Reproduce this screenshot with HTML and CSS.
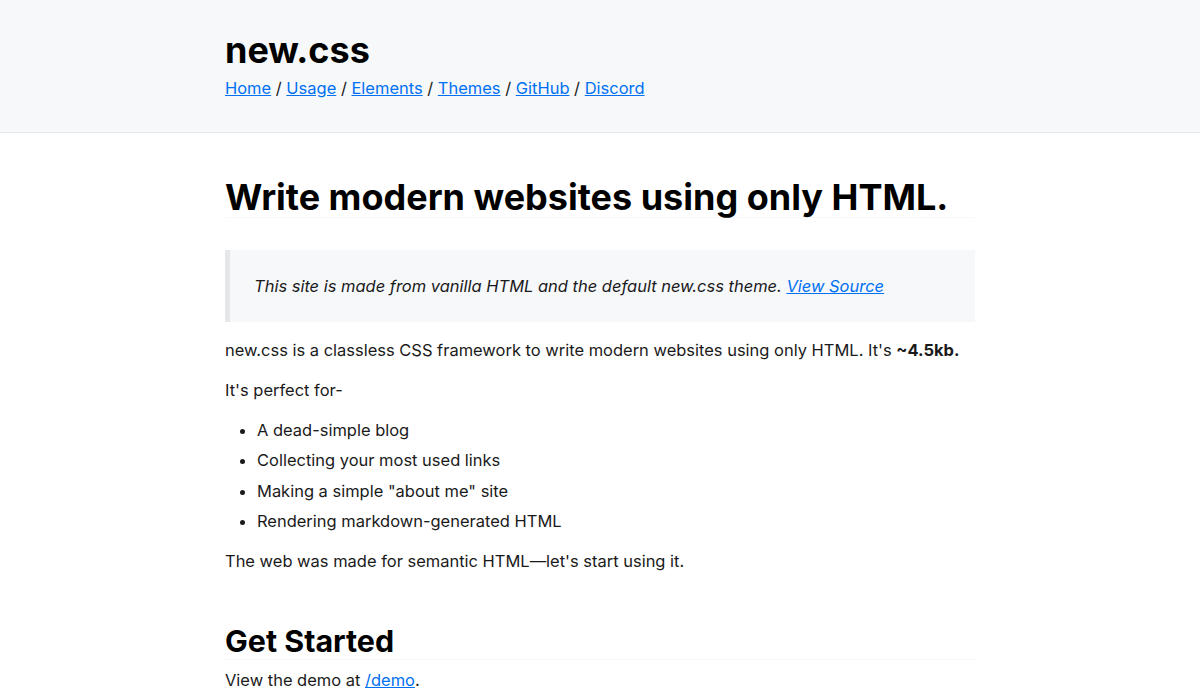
FILE: index.html
```html
<!DOCTYPE html>
<html lang="en">
<head>
<meta charset="utf-8">
<title>new.css</title>
<link rel="stylesheet" href="styles.css">
</head>
<body>
<header class="site-header">
  <div class="wrap">
    <h1 class="brand">new.css</h1>
    <nav class="site-nav">
      <a href="#">Home</a> / <a href="#">Usage</a> / <a href="#">Elements</a> / <a href="#">Themes</a> / <a href="#">GitHub</a> / <a href="#">Discord</a>
    </nav>
  </div>
</header>
<main class="wrap content">
  <h1 class="title">Write modern websites using only HTML.</h1>
  <blockquote class="note">This site is made from vanilla HTML and the default new.css theme. <a href="#">View Source</a></blockquote>
  <p class="para">new.css is a classless CSS framework to write modern websites using only HTML. It's <b>~4.5kb.</b></p>
  <p class="para">It's perfect for-</p>
  <ul class="list">
    <li>A dead-simple blog</li>
    <li>Collecting your most used links</li>
    <li>Making a simple "about me" site</li>
    <li>Rendering markdown-generated HTML</li>
  </ul>
  <p class="para">The web was made for semantic HTML—let's start using it.</p>
  <h2 class="section-title">Get Started</h2>
  <p class="para">View the demo at <a href="#">/demo</a>.</p>
</main>
</body>
</html>
```

FILE: styles.css
```css
:root {
  --tx-1: #000000;
  --tx-2: #1a1a1a;
  --bg-1: #ffffff;
  --bg-2: #f6f8fa;
  --bg-3: #e5e7eb;
  --lk-1: #0070f3;
}

html, body {
  margin: 0;
  padding: 0;
}

body {
  background: var(--bg-1);
  color: var(--tx-2);
  font-family: "Inter", "Noto Sans", sans-serif;
  font-size: 16.48px;
  line-height: 24px;
}

a {
  color: var(--lk-1);
}

.wrap {
  max-width: 750px;
  margin: 0 auto;
}

.site-header {
  background: var(--bg-2);
  border-bottom: 1px solid var(--bg-3);
  padding: 32px 0;
}

.brand {
  margin: 0 0 8px;
  padding: 0;
  font-size: 36px;
  line-height: 1;
  font-weight: 700;
  color: var(--tx-1);
}

.site-nav {
  line-height: 24px;
}

.title {
  margin: 32px 0 8px;
  padding: 14px 0 2px;
  font-size: 36px;
  line-height: 1;
  font-weight: 700;
  color: var(--tx-1);
  border-bottom: 1px solid var(--bg-2);
}

.note {
  margin: 32px 0 16px;
  padding: 24px;
  background: var(--bg-2);
  border-left: 5px solid var(--bg-3);
  font-style: italic;
}

.para {
  margin: 0 0 16px;
}

.list {
  margin: 16px 0;
  padding-left: 32px;
}

.list li {
  margin-top: 6.4px;
}

.section-title {
  margin: 39px 0 8px;
  padding: 14px 0 2px;
  font-size: 30.4px;
  line-height: 1;
  font-weight: 700;
  color: var(--tx-1);
  border-bottom: 1px solid var(--bg-2);
}
```
